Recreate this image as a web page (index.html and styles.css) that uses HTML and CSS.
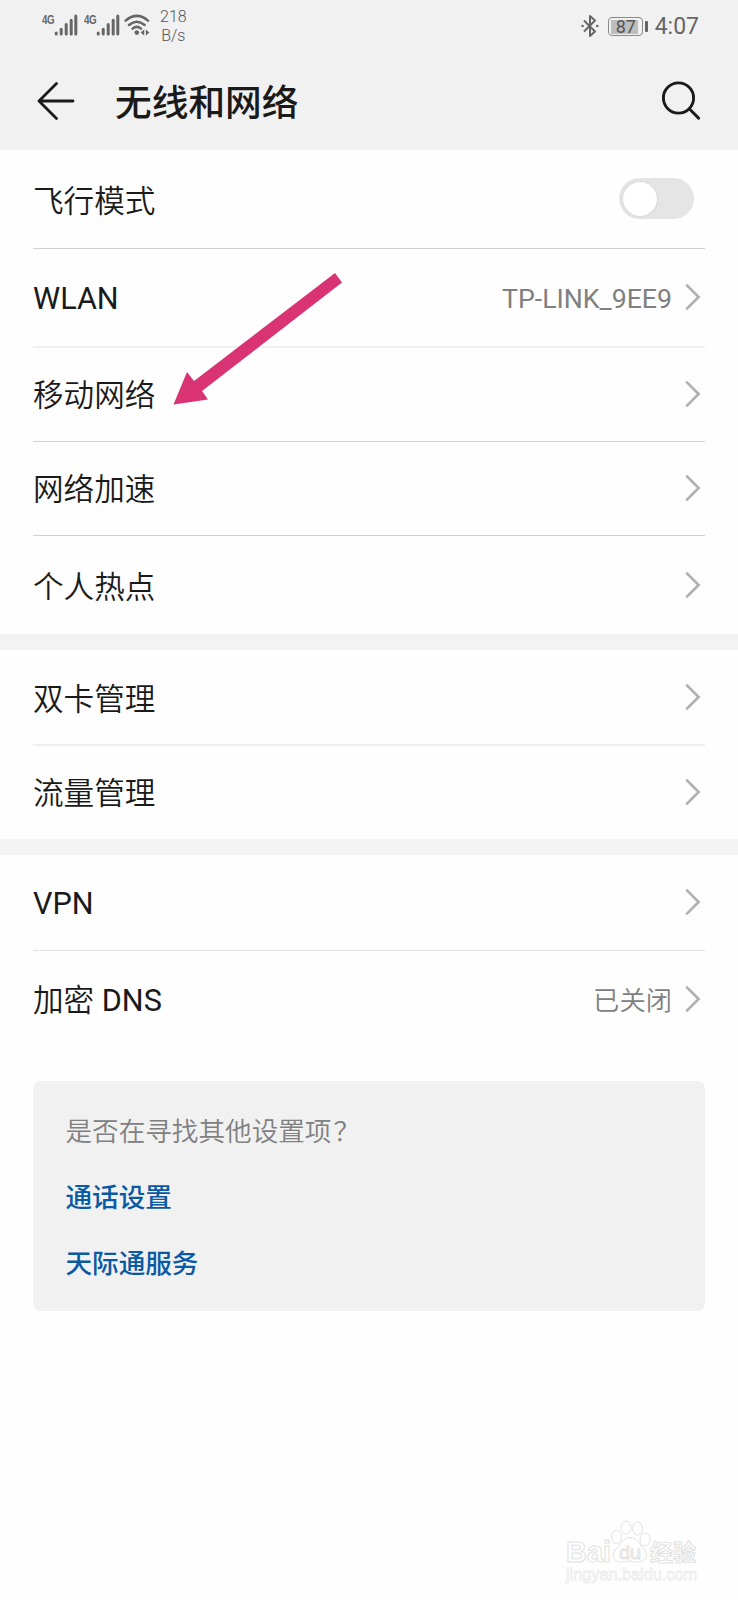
FILE: index.html
```html
<!DOCTYPE html>
<html lang="zh-CN">

<head>
    <meta charset="UTF-8">
    <meta name="viewport" content="width=device-width, initial-scale=1.0">
    <title>无线和网络</title>
    <link rel="stylesheet" href="styles.css">
</head>

<body>
    <svg class="symbols" width="0" height="0">
        <symbol id="chevron" viewBox="0 0 16 28">
            <path d="M2 2.4 L13.6 14 L2 25.6" fill="none" stroke="#b0b0b0" stroke-width="2.7" stroke-linecap="round" />
        </symbol>
        <symbol id="signal" viewBox="0 0 24 22">
            <g stroke="#666" stroke-width="3" stroke-linecap="round">
                <path d="M2.2 19v1M7.2 15.2V20M12.2 10.6V20M17.2 6.2V20M21.8 2V20" />
            </g>
        </symbol>
    </svg>

    <header>
        <div class="status-bar">
            <div class="status-left">
                <div class="sim"><span>4G</span><svg width="24" height="22"><use href="#signal" /></svg></div>
                <div class="sim"><span>4G</span><svg width="24" height="22"><use href="#signal" /></svg></div>
                <svg class="wifi" width="26" height="24" viewBox="0 0 26 24">
                    <g fill="none" stroke="#666" stroke-width="2.5" stroke-linecap="round">
                        <path d="M1.6 7.6Q12.8 -1.8 24 7.6" />
                        <path d="M5 12Q12.8 5.4 20.6 12" />
                        <path d="M8.6 15.6Q12.8 12.2 17 15.6" />
                    </g>
                    <circle cx="12.8" cy="19.6" r="2.3" fill="#666" />
                    <path d="M20.2 16.5v6l-3.600-3zM21.8 16.5v6l3.600-3z" fill="#666" />
                </svg>
                <div class="speed">218<br>B/s</div>
            </div>
            <div class="status-right">
                <svg width="18" height="24" viewBox="0 0 18 24">
                    <path d="M3 6.5L14 17.5L9 22V2L14 6.5L3 17.5" fill="none" stroke="#666" stroke-width="2" stroke-linejoin="round" />
                    <circle cx="1.6" cy="12" r="1.3" fill="#666" />
                    <circle cx="16.2" cy="12" r="1.3" fill="#666" />
                </svg>
                <div class="battery"><span>87</span></div>
                <div class="clock">4:07</div>
            </div>
        </div>
        <div class="title-bar">
            <svg width="38" height="38" viewBox="0 0 38 38">
                <path d="M19.5 1.5L2 19L19.5 36.5M2 19H36" fill="none" stroke="#1a1a1a" stroke-width="2.8" stroke-linecap="round" stroke-linejoin="round" />
            </svg>
            <h1>无线和网络</h1>
            <svg width="40" height="40" viewBox="0 0 40 40">
                <circle cx="17.5" cy="17" r="15.1" fill="none" stroke="#1a1a1a" stroke-width="2.9" />
                <path d="M28.5 28L37.6 37.1" stroke="#1a1a1a" stroke-width="2.9" stroke-linecap="round" />
            </svg>
        </div>
    </header>

    <main>
        <ul class="group">
            <li class="row tall">
                <span class="label cn">飞行模式</span>
                <span class="toggle"></span>
            </li>
            <li class="row tall soft">
                <span class="label">WLAN</span>
                <span class="value">TP-LINK_9EE9</span>
                <svg class="chevron"><use href="#chevron" /></svg>
            </li>
            <li class="row">
                <span class="label cn">移动网络</span>
                <svg class="chevron"><use href="#chevron" /></svg>
            </li>
            <li class="row">
                <span class="label cn">网络加速</span>
                <svg class="chevron"><use href="#chevron" /></svg>
            </li>
            <li class="row last">
                <span class="label cn">个人热点</span>
                <svg class="chevron"><use href="#chevron" /></svg>
            </li>
        </ul>
        <ul class="group">
            <li class="row mid soft">
                <span class="label cn">双卡管理</span>
                <svg class="chevron"><use href="#chevron" /></svg>
            </li>
            <li class="row short">
                <span class="label cn">流量管理</span>
                <svg class="chevron"><use href="#chevron" /></svg>
            </li>
        </ul>
        <ul class="group">
            <li class="row mid light">
                <span class="label">VPN</span>
                <svg class="chevron"><use href="#chevron" /></svg>
            </li>
            <li class="row dns">
                <span class="label"><span class="thin">加密</span> DNS</span>
                <span class="value cn">已关闭</span>
                <svg class="chevron"><use href="#chevron" /></svg>
            </li>
        </ul>

        <section class="card">
            <p>是否在寻找其他设置项<span class="mark">？</span></p>
            <a>通话设置</a>
            <a>天际通服务</a>
        </section>
    </main>

    <svg class="arrow" width="170" height="134" viewBox="0 0 170 134">
        <path d="M.5 132.5L14 100L21 109L162 1L169 10.500L29 119L35 127.500z" fill="#da3373" />
    </svg>

    <svg class="watermark" width="140" height="70" viewBox="0 0 140 70">
        <g fill="#fff" stroke="#e2e2e2" stroke-width="1">
            <text x="1" y="41.500" font-size="29" font-weight="700" textLength="45" lengthAdjust="spacingAndGlyphs">Bai</text>
            <ellipse cx="51.500" cy="17" rx="5" ry="6.500" />
            <ellipse cx="61" cy="7.500" rx="5" ry="6.500" />
            <ellipse cx="72.500" cy="8.500" rx="5" ry="6.500" />
            <ellipse cx="80" cy="19.500" rx="5" ry="6.500" />
            <path d="M65 17.500C72 17.500 74 24 79 29C84 34 81 42 73 42C69 42 68 41 65 41C62 41 60 42 56 42C48 42 46 34 51 29C56 24 58 17.500 65 17.500z" />
            <text x="54" y="38.500" font-size="18" textLength="22" lengthAdjust="spacingAndGlyphs">du</text>
            <text class="cjk" x="85" y="41" font-size="23" font-weight="700">经验</text>
            <text x="1" y="59.500" font-size="17" stroke="#ebebeb" stroke-width=".8" textLength="131" lengthAdjust="spacingAndGlyphs">jingyan.baidu.com</text>
        </g>
    </svg>
</body>

</html>
```

FILE: styles.css
```css
* {
    box-sizing: border-box;
}

body {
    position: relative;
    margin: 0;
    height: 1600px;
    overflow: hidden;
    background-color: #fefefe;
    color: #1a1a1a;
    font-family: Roboto, "Noto Sans CJK SC", sans-serif;
}

svg {
    display: block;
    flex-shrink: 0;
}

.symbols {
    position: absolute;
}

header {
    height: 150px;
    background-color: #f1f1f1;
}

.status-bar {
    display: flex;
    justify-content: space-between;
    height: 52px;
    padding: 0 39px 0 42px;
    color: #666;
}

.status-left,
.status-right {
    display: flex;
    align-items: flex-start;
}

.sim {
    display: flex;
    width: 42px;
    padding-top: 14px;
}

.sim span {
    width: 12px;
    font-family: "Liberation Sans", sans-serif;
    font-size: 13px;
    font-weight: 700;
    line-height: 12px;
    letter-spacing: -0.5px;
    transform: scaleX(0.75);
    transform-origin: left;
}

.wifi {
    margin-top: 13px;
    margin-left: -2px;
}

.speed {
    margin: 8px 0 0 10px;
    color: #555;
    font-size: 16px;
    font-weight: 300;
    line-height: 18.5px;
    text-align: center;
}

.status-right {
    align-items: center;
}

.battery {
    position: relative;
    width: 35px;
    height: 19px;
    margin: 0 12px 0 9px;
    padding: 2px;
    border: 1.5px solid #8a8a8a;
    border-radius: 4px;
}

.battery span {
    display: block;
    width: 27px;
    height: 14px;
    padding-left: 5px;
    background-color: #bebebe;
    color: #555;
    font-size: 18px;
    line-height: 14px;
}

.battery::after {
    content: "";
    position: absolute;
    top: 3px;
    right: -6px;
    width: 3px;
    height: 11px;
    border-radius: 1px;
    background-color: #666;
}

.clock {
    padding-top: 2px;
    font-size: 23px;
    line-height: 24px;
}

.title-bar {
    display: flex;
    align-items: center;
    height: 97px;
    padding: 0 37px;
}

h1 {
    flex: 1;
    margin: 7px 0 0 40px;
    font-size: 36.7px;
    font-weight: 500;
    line-height: 48px;
}

.group {
    margin: 0;
    padding: 0;
    list-style: none;
}

.group + .group {
    border-top: 16px solid #f3f3f3;
}

.row {
    display: flex;
    align-items: center;
    height: 94px;
    margin: 0 33px;
    border-bottom: 1px solid #d0d0d0;
}

.row.tall {
    height: 99px;
}

.row.mid {
    height: 96px;
}

.row.short {
    height: 93px;
    border-bottom: none;
}

.row.last {
    height: 98px;
    border-bottom: none;
}

.row.dns {
    height: 96px;
    border-bottom: none;
}

.row.soft {
    border-bottom: 2px solid #efefef;
}

.row.light {
    border-bottom-color: #e3e3e3;
}

.label {
    flex: 1;
    padding-top: 2px;
    font-size: 30.6px;
    line-height: 40px;
}

.label.cn {
    padding-top: 3px;
    font-weight: 350;
}

.row.tall .label.cn,
.row.mid .label.cn,
.row.last .label.cn {
    padding-top: 5px;
}

.thin {
    font-weight: 350;
}

.row.dns .label {
    padding-top: 4px;
}

.value {
    padding-top: 2px;
    margin-right: 13px;
    color: #808080;
    font-size: 26.7px;
    line-height: 36px;
}

.value.cn {
    padding-top: 4px;
    font-size: 26.3px;
    font-weight: 350;
}

.chevron {
    width: 16px;
    height: 28px;
    margin: 0 4px 1px 0;
}

.toggle {
    width: 75px;
    height: 41px;
    margin: 0 11px 1px 0;
    padding: 4px;
    border-radius: 21px;
    background-color: #e5e5e5;
}

.toggle::before {
    content: "";
    display: block;
    width: 34px;
    height: 34px;
    border-radius: 50%;
    background-color: #fff;
    box-shadow: 0 0 3px rgba(0, 0, 0, 0.12);
}

.card {
    height: 230px;
    margin: 34px 33px 0;
    padding: 18px 32.5px;
    border-radius: 8px;
    background-color: #f1f1f1;
    font-size: 26.6px;
    line-height: 66px;
}

.card p {
    margin: 0;
    color: #808080;
    font-weight: 350;
}

.mark {
    margin-left: 2px;
}

.card a {
    display: block;
    color: #0a59a3;
    font-weight: 500;
}

.arrow {
    position: absolute;
    top: 272px;
    left: 173px;
}

.watermark {
    position: absolute;
    top: 1520px;
    left: 565px;
    overflow: visible;
    font-family: "Liberation Sans", sans-serif;
}

.watermark .cjk {
    font-family: "Noto Sans CJK SC", sans-serif;
}
```
